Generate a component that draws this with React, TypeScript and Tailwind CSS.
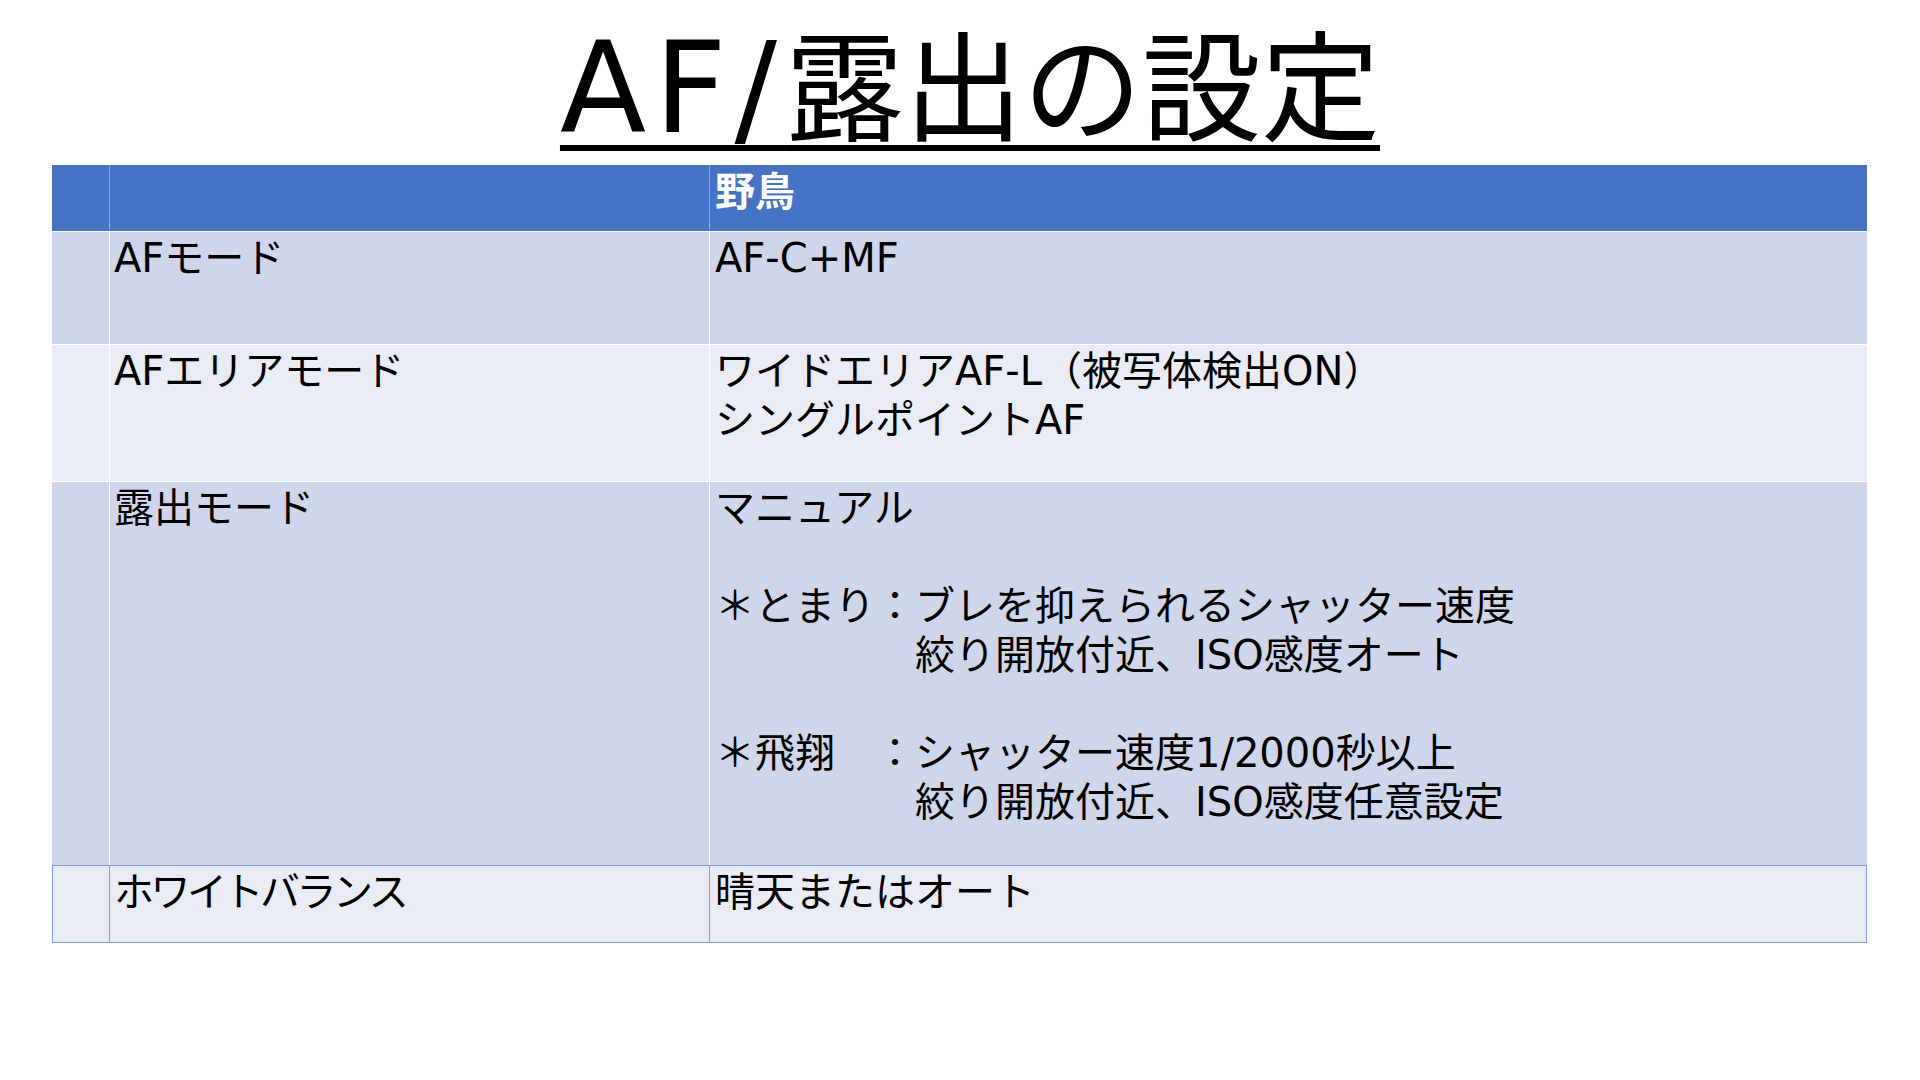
import React from "react";

const FONT = "font-['DejaVu_Sans','Noto_Sans_CJK_JP',sans-serif]";

function Line({ children, indent = false }: { children?: React.ReactNode; indent?: boolean }) {
  return (
    <div className={`h-[49px] whitespace-nowrap ${indent ? "pl-[200px]" : ""}`}>{children}</div>
  );
}

export default function App() {
  return (
    <div className={`w-[1920px] h-[1080px] bg-white text-black overflow-hidden ${FONT}`}>
      {/* Title */}
      <div className="h-[165px] pt-[27px] pl-[20px] text-center">
        <span className="text-[119px] leading-[124px] underline decoration-[6px] underline-offset-[13px] [text-decoration-skip-ink:none]">
          <span className="text-[126px] tracking-[8px]">AF/</span>露出の設定
        </span>
      </div>

      {/* Table */}
      <div className="ml-[52px] w-[1815px] text-[40px] leading-[49px]">
        {/* Header */}
        <div className="flex h-[66px] bg-[#4472C4] text-white font-bold">
          <div className="w-[57px]" />
          <div className="w-[600px] border-l border-[#8fa8dc]" />
          <div className="flex-1 border-l border-[#8fa8dc] pl-[5px] pt-[3px]">野鳥</div>
        </div>

        {/* AFモード */}
        <div className="flex h-[113px] bg-[#CFD5EA] border-t border-white">
          <div className="w-[57px]" />
          <div className="w-[600px] border-l border-white pl-[4px] pt-[2px]">
            <Line>AFモード</Line>
          </div>
          <div className="flex-1 border-l border-white pl-[5px] pt-[2px]">
            <Line>AF-C+MF</Line>
          </div>
        </div>

        {/* AFエリアモード */}
        <div className="flex h-[137px] bg-[#E9EBF5] border-t border-white">
          <div className="w-[57px]" />
          <div className="w-[600px] border-l border-white pl-[4px] pt-[2px]">
            <Line>AFエリアモード</Line>
          </div>
          <div className="flex-1 border-l border-white pl-[5px] pt-[2px]">
            <Line>ワイドエリアAF-L（被写体検出ON）</Line>
            <Line>シングルポイントAF</Line>
          </div>
        </div>

        {/* 露出モード */}
        <div className="flex h-[384px] bg-[#CFD5EA] border-t border-white">
          <div className="w-[57px]" />
          <div className="w-[600px] border-l border-white pl-[4px] pt-[2px]">
            <Line>露出モード</Line>
          </div>
          <div className="flex-1 border-l border-white pl-[5px] pt-[2px]">
            <Line>マニュアル</Line>
            <Line />
            <Line>＊とまり：ブレを抑えられるシャッター速度</Line>
            <Line indent>絞り開放付近、ISO感度オート</Line>
            <Line />
            <Line>＊飛翔　：シャッター速度1/2000秒以上</Line>
            <Line indent>絞り開放付近、ISO感度任意設定</Line>
          </div>
        </div>

        {/* ホワイトバランス */}
        <div className="flex h-[78px] bg-[#E9EBF5] border border-[#7f9ddc]">
          <div className="w-[56px]" />
          <div className="w-[600px] border-l border-[#7f9ddc] pl-[4px] pt-[2px]">
            <Line>
              <span className="tracking-[-3.5px]">ホワイトバランス</span>
            </Line>
          </div>
          <div className="flex-1 border-l border-[#7f9ddc] pl-[5px] pt-[2px]">
            <Line>晴天またはオート</Line>
          </div>
        </div>
      </div>
    </div>
  );
}
